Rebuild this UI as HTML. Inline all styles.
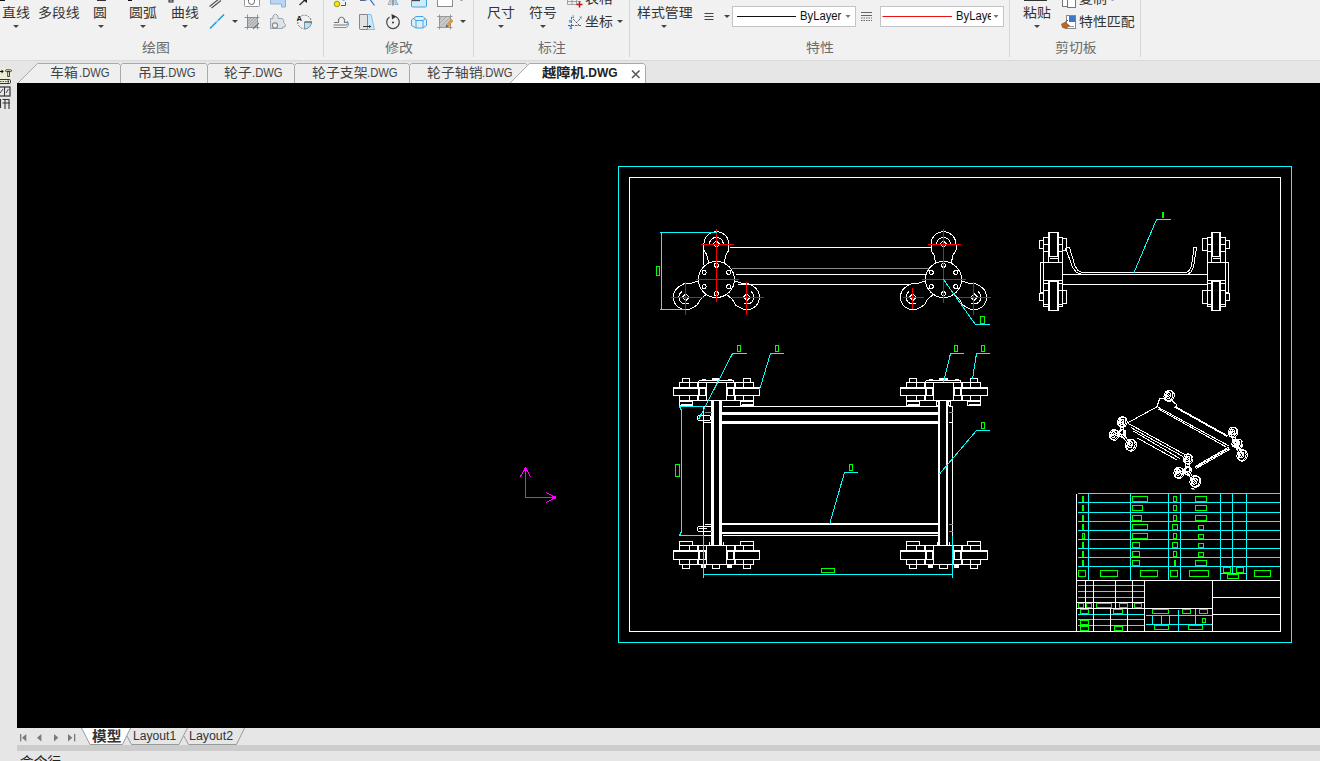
<!DOCTYPE html>
<html lang="zh-CN">
<head>
<meta charset="utf-8">
<title>越障机.DWG</title>
<style>
*{box-sizing:border-box;margin:0;padding:0}
html,body{width:1320px;height:761px;overflow:hidden;background:#e6e6e6}
body{position:relative;font-family:"Liberation Sans","Noto Sans CJK SC",sans-serif;font-size:13px;color:#262626}
#ribbon{position:absolute;left:0;top:0;width:1320px;height:61px;background:#f1f1f1;border-bottom:1px solid #d9d9d9;overflow:hidden}
#ribbon .lbl{position:absolute;transform:scaleX(1.07);transform-origin:0 0;white-space:nowrap;font-size:13px;line-height:16px;color:#333}
#ribbon .ttl{position:absolute;transform:scaleX(1.07);transform-origin:0 0;white-space:nowrap;font-size:13px;line-height:16px;color:#6b6b6b;top:40px}
#ribbon .sep{position:absolute;top:0;width:1px;height:57px;background:#d6d6d6}
#ribbon .dd{position:absolute;width:0;height:0;border-left:3px solid transparent;border-right:3px solid transparent;border-top:3px solid #444}
#ribbon .combo{position:absolute;top:6px;height:21px;background:#fff;border:1px solid #c4c4c4;overflow:hidden}
#ribbon .combo span{position:absolute;top:1px;font-size:12.5px;line-height:17px;color:#111;white-space:nowrap;transform:scaleX(.9);transform-origin:0 0}
#ribbon .combo b{position:absolute;top:0;height:19px;overflow:hidden;font-weight:normal}
#ribbon svg{position:absolute;left:0;top:0}
#tabbar{position:absolute;left:0;top:61px;width:1320px;height:22px;background:#e6e6e6}
#tabbar svg{position:absolute;left:0;top:0}
#tabbar .t{position:absolute;top:4px;font-size:13px;line-height:16px;white-space:nowrap;color:#444}
#tabbar .t.c{transform:scaleX(1.07);transform-origin:0 0}
#tabbar .t.l{font-size:12.5px;transform:scaleX(0.9);transform-origin:0 0}
#tabbar .t.l.act{transform:scaleX(0.96)}
#tabbar .t.act{font-weight:bold;color:#222}
#gutter{position:absolute;left:0;top:83px;width:17px;height:678px;background:#e6e6e6}
#canvas{position:absolute;left:17px;top:83px;width:1303px;height:645px;background:#000;overflow:hidden}
#canvas svg{position:absolute;left:-17px;top:-83px}
#laybar{position:absolute;left:17px;top:728px;width:1303px;height:17px;background:#e6e6e6}
#laybar svg{position:absolute;left:-17px;top:0}
#laybar .t{position:absolute;white-space:nowrap;font-size:13px;line-height:16px;color:#333}
#band{position:absolute;left:17px;top:745px;width:1303px;height:6px;background:#cccccc}
#cmd{position:absolute;left:20px;top:754px;transform:scaleX(1.05);transform-origin:0 0;font-size:13px;line-height:16px;color:#222;white-space:nowrap}
</style>
</head>
<body>
<div id="ribbon">
<span class="lbl" style="left:2px;top:5px">直线</span>
<span class="lbl" style="left:38px;top:5px">多段线</span>
<span class="lbl" style="left:93px;top:5px">圆</span>
<span class="lbl" style="left:129px;top:5px">圆弧</span>
<span class="lbl" style="left:171px;top:5px">曲线</span>
<i class="dd" style="left:13px;top:25px"></i>
<i class="dd" style="left:98px;top:25px"></i>
<i class="dd" style="left:140px;top:25px"></i>
<i class="dd" style="left:182px;top:25px"></i>
<i class="dd" style="left:232px;top:20px"></i>
<span class="ttl" style="left:142px">绘图</span>
<i class="sep" style="left:323px"></i>
<i class="dd" style="left:460px;top:20px"></i>
<span class="ttl" style="left:385px">修改</span>
<i class="sep" style="left:473px"></i>
<span class="lbl" style="left:487px;top:5px">尺寸</span>
<span class="lbl" style="left:529px;top:5px">符号</span>
<i class="dd" style="left:498px;top:25px"></i>
<i class="dd" style="left:540px;top:25px"></i>
<span class="lbl" style="left:585px;top:-9px">表格</span>
<span class="lbl" style="left:585px;top:14px">坐标</span>
<i class="dd" style="left:617px;top:20px"></i>
<span class="ttl" style="left:538px">标注</span>
<i class="sep" style="left:629px"></i>
<span class="lbl" style="left:637px;top:5px">样式管理</span>
<i class="dd" style="left:661px;top:25px"></i>
<i class="dd" style="left:724px;top:15px"></i>
<div class="combo" style="left:732px;width:124px"><span style="left:67px">ByLayer</span></div>
<div class="combo" style="left:880px;width:124px"><b style="left:75px;width:35px"><span style="left:0">ByLayer</span></b></div>
<span class="ttl" style="left:806px">特性</span>
<i class="sep" style="left:1009px"></i>
<span class="lbl" style="left:1023px;top:5px">粘贴</span>
<i class="dd" style="left:1034px;top:25px"></i>
<span class="lbl" style="left:1079px;top:-9px">复制</span>
<span class="lbl" style="left:1079px;top:14px">特性匹配</span>
<span class="ttl" style="left:1055px">剪切板</span>
<i class="sep" style="left:1140px"></i>
<svg width="1320" height="60" viewBox="0 0 1320 60" fill="none">
<!--RICONS-->
<!-- top-left residue -->
<rect x="0" y="0" width="5" height="1" fill="#111"/><rect x="97" y="0" width="9" height="1" fill="#333"/><rect x="128" y="0" width="4" height="1" fill="#111"/><rect x="169" y="0" width="4" height="2" fill="none" stroke="#222"/>
<!-- draw panel small icons -->
<path d="M209.5 6.5 L219 -1 M211.5 8 L221 0.5" stroke="#555" stroke-width="1.2"/>
<path d="M210 28.5 L216.5 22 M218 20.5 L224 14.5" stroke="#1da1e6" stroke-width="1.6"/><rect x="216.6" y="20.6" width="1.2" height="1.2" fill="#1da1e6"/>
<rect x="244.5" y="-3" width="15" height="9.5" rx="1" fill="#fff" stroke="#9a9a9a"/><path d="M248.5 0 V1.5 A3 3 0 0 0 254.5 1.5 V0" stroke="#666"/>
<path d="M270.5 0 V4 H281.5 V7 H285.5 V0" fill="#bcd5f2" stroke="#8fb0da"/>
<path d="M299.5 5 L306 -1" stroke="#333" stroke-width="1.3"/><path d="M303 0 H307 V3 Z" fill="#222"/>
<rect x="247" y="17" width="10" height="10" fill="#c4c7ca"/><path d="M247 19 l2-2 M247 22 l5-5 M247 25 l8-8 M248 27 l9-9 M251 27 l6-6 M254 27 l3-3" stroke="#9a9da1" stroke-width=".8"/><path d="M244.5 17.5 H259.5 M244.5 27.5 H259.5 M247.5 14.5 V29.5 M257.5 14.5 V29.5" stroke="#7d7d7d" stroke-width=".8"/><path d="M253 29 L259 23" stroke="#777" stroke-width="1.1"/>
<path d="M270.5 28.5 V18.5 H273 V16 Q275.5 12.5 278 16 V18.5 H282 Q285 20 283.5 22.5 Q286.5 24 285 27 H282.5 V28.5 Z" fill="#dfe3ea" stroke="#9aa3b0"/><circle cx="275" cy="25.5" r="2.6" fill="#f1f1f1" stroke="#8e8e8e" stroke-width="1.2"/>
<circle cx="304.5" cy="22" r="6.8" stroke="#666" stroke-dasharray="2 1.2" stroke-width=".9"/><path d="M304.5 22 V29 A7 7 0 0 0 311.5 22 Z" fill="#b6e3f8" stroke="#6a7f8c" stroke-width=".8"/><path d="M304.5 22 H311.5" stroke="#555"/><text x="296.5" y="20.5" font-family="Liberation Sans,sans-serif" font-size="7.5" font-weight="bold" fill="#222">A</text>
<!-- modify panel -->
<circle cx="337" cy="4" r="2.8" fill="#f4e800" stroke="#8a8400" stroke-width=".8"/><path d="M341 5.5 H345.5 V2" stroke="#b03030" stroke-width="1"/><path d="M342.5 0 h2" stroke="#2a6fd0"/>
<path d="M360 0 H367 M369 -2 L374.5 5.5" stroke="#2a6fd0" stroke-width="1.2"/><path d="M360 0 H365" stroke="#555" stroke-width="1.6"/>
<path d="M388 4.5 L391 -2 V4.5 Z" fill="#e8e8e8" stroke="#999" stroke-width=".8"/><path d="M398 4.5 L395 -2 V4.5 Z" fill="#bfe0f5" stroke="#6aa9d8" stroke-width=".8"/><path d="M393 -1 V5.5" stroke="#777" stroke-width="1.4"/>
<rect x="411.5" y="-2" width="15" height="9" rx="1" fill="#c9ebfb" stroke="#4aa3e0"/><path d="M412 0.5 H420" stroke="#444" stroke-width="1.3"/>
<rect x="437.500" y="-3" width="15" height="9.500" fill="#fff" stroke="#8a8a8a"/><path d="M437.5 0 v3" stroke="#4aa3e0"/>
<path d="M460.500 0 h2" stroke="#444"/>
<path d="M334 22.500 H338.500 V19.500 Q341.500 14.500 344.500 19.500 V22.500 H347" stroke="#777" stroke-width="1.200"/><path d="M333.500 25 H346.500 Q349.500 23.500 347 21" stroke="#777" stroke-width="1"/><path d="M333.500 27.500 H346 Q350 25.500 347.500 22" stroke="#4aa3e0" stroke-width="1"/>
<path d="M367.500 14.500 H371 L374.500 29.500 H367.500 Z" fill="#c9ebfb" stroke="#6ab4e6" stroke-width=".8"/><path d="M359.500 14.500 H367.500 V29.500 H360.500 Q359.500 29.500 359.500 28.500 Z" fill="#e2e2e2" stroke="#888"/><path d="M363 26.500 H370" stroke="#333"/><path d="M369 25 L371.500 26.500 L369 28 Z" fill="#333"/>
<path d="M396 16.700 A6.300 6.300 0 1 1 389.500 17" stroke="#444" stroke-width="1.200"/><path d="M391.500 14 L396.500 16.500 L392 19.500 Z" fill="#333"/><circle cx="393" cy="22.500" r="1" fill="#333"/>
<path d="M411.500 20 L416 16.500 H423 L426.500 20 V25.500 L423 28 H416 L411.500 25.500 Z" fill="#d9f0fb" stroke="#4a9fe0"/><path d="M416 20.500 H423 V28 M416 20.500 V28 M416 20.500 L413.500 18.500 M423 20.500 L425.500 18.500" stroke="#4a9fe0"/>
<rect x="439" y="16.500" width="11.500" height="11" fill="#c9cccf"/><path d="M439 20 l3.500-3.500 M439 24 l7.500-7.500 M440 27.500 l10.500-10.500 M444 27.500 l6.500-6.500 M448 27.500 l2.500-2.500" stroke="#9b9ea2" stroke-width=".8"/><path d="M437 16.500 H452.500 M437 27.500 H452.500 M439.500 14.500 V29.500 M450.500 14.500 V29.500" stroke="#888" stroke-width=".8"/><path d="M446.500 25 L451.500 19.500 L453 21 L448 26.500 Z" fill="#f0a030" stroke="#b87410" stroke-width=".6"/><path d="M446.500 25 L446 27 L448 26.500 Z" fill="#333"/>
<!-- annotate panel -->
<path d="M567.500 -2 V4.500 H581 M567.500 1.500 H581 M572 -2 V4.500 M576.500 -2 V4.500" stroke="#999" stroke-width=".9"/><path d="M576.500 4.500 H582.500 M579.500 1.500 V7.500" stroke="#c01818" stroke-width="1.500"/>
<path d="M571.500 17 V29 M568 25.500 H582 M573 19 L579 25 M580 19 L576 23" stroke="#555" stroke-width=".9" stroke-dasharray="2.500 1"/><path d="M569 20 l1 1.500 l1 -1.500 M570 21.500 v1.500 M569.500 26.500 h1.500 v2 h-1.500 M572.500 16 h1.500 m-1.500 1.500 h1.500 M580 16.500 l1.500 2 m0 -2 l-1.500 2" stroke="#2a7fd8" stroke-width=".9"/>
<!-- properties panel -->
<path d="M704.500 13.500 H713.500 M704.500 16.500 H713.500 M704.500 19.500 H713.500" stroke="#444" stroke-width="1.200"/>
<path d="M737 16.500 H796" stroke="#111" stroke-width="1.200"/>
<path d="M845.500 15 h5 l-2.500 3 Z" fill="#777"/>
<path d="M861 12.500 H872 M861 15.500 H872" stroke="#666" stroke-width="1.200"/><path d="M861 18 H872 M861 20.500 H872" stroke="#666" stroke-width="1" stroke-dasharray="1.500 1"/>
<path d="M882.500 16.500 H952" stroke="#e81010" stroke-width="1.200"/>
<path d="M993.500 15 h5 l-2.500 3 Z" fill="#777"/>
<!-- clipboard panel -->
<rect x="1024" y="-2" width="23" height="3" fill="#333"/>
<rect x="1062.500" y="-3" width="8" height="9.500" fill="#fff" stroke="#777"/><rect x="1067.500" y="-1" width="8" height="8.500" fill="#fff" stroke="#777"/>
<path d="M1111.500 0 h2" stroke="#555"/>
<rect x="1066.500" y="15.500" width="9" height="13" fill="#fff" stroke="#888"/><rect x="1069" y="16" width="6.500" height="6" fill="#3c78c8"/><path d="M1067 26.500 H1074" stroke="#999"/><path d="M1061.500 24 L1065 22.500 L1069.500 25.500 L1066 28.500 L1062.500 27.500 Z" fill="#b86a22" stroke="#8a4a10" stroke-width=".6"/><path d="M1065 22.500 L1068 20" stroke="#555"/>
<!--/RICONS-->
</svg>

</div>
<div id="tabbar">
<svg width="1320" height="22" viewBox="0 61 1320 22" fill="none">
<path d="M17.5 83.5 L37.5 63.5 H118.5 L120.5 65.5 V83.5 Z" fill="#efefef" stroke="#a9a9a9"/>
<path d="M120.5 83.5 V65.5 L122.5 63.5 H205.5 L207.5 65.5 V83.5 Z" fill="#efefef" stroke="#a9a9a9"/>
<path d="M207.5 83.5 V65.5 L209.5 63.5 H292.5 L294.5 65.5 V83.5 Z" fill="#efefef" stroke="#a9a9a9"/>
<path d="M294.5 83.5 V65.5 L296.5 63.5 H407.5 L409.5 65.5 V83.5 Z" fill="#efefef" stroke="#a9a9a9"/>
<path d="M409.5 83.5 V65.5 L411.5 63.5 H525.5 L527.5 65.5 V83.5 Z" fill="#efefef" stroke="#a9a9a9"/>
<path d="M509.5 83.5 L529.5 63.5 H643.5 L645.5 65.5 V83.5 Z" fill="#ffffff" stroke="#a9a9a9"/>
<path d="M632 70.5 L639.5 78 M639.5 70.5 L632 78" stroke="#555" stroke-width="1.5"/>
</svg>
<span class="t c" style="left:50px">车箱</span><span class="t l" style="left:79px">.DWG</span>
<span class="t c" style="left:138px">吊耳</span><span class="t l" style="left:165px">.DWG</span>
<span class="t c" style="left:224px">轮子</span><span class="t l" style="left:252px">.DWG</span>
<span class="t c" style="left:312px">轮子支架</span><span class="t l" style="left:367px">.DWG</span>
<span class="t c" style="left:427px">轮子轴销</span><span class="t l" style="left:482px">.DWG</span>
<span class="t c act" style="left:542px;transform:scaleX(1.1)">越障机</span><span class="t l act" style="left:585px">.DWG</span>
</div>
<div id="gutter"></div>
<svg id="gicons" width="17" height="60" viewBox="0 60 17 60" style="position:absolute;left:0;top:60px">
<!--GICONS-->
<rect x="0" y="68" width="12" height="16" fill="#ececd8"/>
<path d="M0 71.500 H2" stroke="#111" stroke-width="1.200"/><path d="M1.500 69.500 L3.800 71.500 L1.500 73.500 Z" fill="#111"/>
<rect x="5.500" y="69.800" width="6" height="1.800" rx=".9" stroke="#333" fill="none" stroke-width=".9"/><rect x="7.700" y="71.500" width="1.800" height="5" stroke="#333" fill="none" stroke-width=".9"/>
<rect x="-2" y="79.500" width="12.500" height="4" rx="1.200" stroke="#333" fill="none" stroke-width="1"/><path d="M0 81.500 H7" stroke="#555" stroke-width="1" stroke-dasharray="1.500 1"/><rect x="7.500" y="80.500" width="1.500" height="2" fill="#333"/>
<rect x="-2" y="87" width="12" height="9" stroke="#333" fill="none" stroke-width="1.2"/><path d="M4.500 87 V96" stroke="#333"/><path d="M0 93 L3 89 M6 93 L8.500 89" stroke="#333" stroke-width=".9"/>
<path d="M0.500 99 V108 M5 99 V109 M9 99 V109 M2.500 99.500 H9.500 M2.500 103 H10" stroke="#333" stroke-width="1.100"/>
<!--/GICONS-->
</svg>
<div id="canvas">
<svg width="1320" height="761" viewBox="0 0 1320 761" shape-rendering="crispEdges" fill="none" stroke-width="1">
<!--CAD-->
<rect x="618.5" y="166.5" width="673" height="476" stroke="#00ffff"/>
<rect x="629.5" y="177.5" width="651" height="454" stroke="#ffffff"/>
<path d="M525.5 468.5L525.5 497.5" stroke="#ff00ff"/>
<path d="M525.5 497.5L555.5 497.5" stroke="#ff00ff"/>
<path d="M520.2 477L525.5 468L530.8 477" stroke="#ff00ff"/>
<path d="M546 492.2L555 497.5L546 502.8" stroke="#ff00ff"/>
<rect x="524" y="468" width="3" height="2" fill="#ff00ff"/>
<rect x="553" y="496" width="3" height="3" fill="#ff00ff"/>
<circle cx="716.4" cy="279.5" r="18" stroke="#ffffff"/>
<path d="M703.9 244.2L704.09 242.03L704.65 239.92L705.57 237.95L706.82 236.17L708.37 234.62L710.15 233.37L712.12 232.45L714.23 231.89L716.4 231.7L718.57 231.89L720.68 232.45L722.65 233.37L724.43 234.62L725.98 236.17L727.23 237.95L728.15 239.92L728.71 242.03L728.9 244.2" stroke="#ffffff"/>
<path d="M709.53 243.6L710 241.62L711.04 239.86L712.54 238.48L714.38 237.6L716.4 237.3L718.42 237.6L720.26 238.48L721.76 239.86L722.8 241.62L723.27 243.6" stroke="#ffffff"/>
<path d="M713 244.2L716.4 240.8L719.8 244.2L716.4 247.6Z" stroke="#ffffff"/>
<path d="M728.9 244.2L728.9 250L726 255L725.1 258.5L724.2 263.2" stroke="#ffffff"/>
<path d="M703.9 244.2L703.9 250L706.8 255L707.7 258.5L708.6 263.2" stroke="#ffffff"/>
<path d="M753.22 286.32L755.01 287.57L756.55 289.12L757.8 290.9L758.72 292.87L759.28 294.98L759.47 297.15L759.28 299.32L758.72 301.43L757.8 303.4L756.55 305.18L755.01 306.73L753.22 307.98L751.25 308.9L749.14 309.46L746.97 309.65L744.8 309.46L742.7 308.9L740.72 307.98" stroke="#ffffff"/>
<path d="M750.93 291.5L752.41 292.9L753.41 294.68L753.85 296.67L753.69 298.7L752.95 300.6L751.68 302.2L750 303.35L748.05 303.97L746.01 303.98L744.05 303.4" stroke="#ffffff"/>
<path d="M743.57 297.15L746.97 293.75L750.37 297.15L746.97 300.55Z" stroke="#ffffff"/>
<path d="M740.72 307.98L735.7 305.08L732.82 300.06L730.24 297.53L726.62 294.4" stroke="#ffffff"/>
<path d="M753.22 286.32L748.2 283.42L742.42 283.44L738.94 282.47L734.42 280.9" stroke="#ffffff"/>
<path d="M692.08 307.98L690.1 308.9L688 309.46L685.83 309.65L683.66 309.46L681.55 308.9L679.58 307.98L677.79 306.73L676.25 305.18L675 303.4L674.08 301.43L673.52 299.32L673.33 297.15L673.52 294.98L674.08 292.87L675 290.9L676.25 289.12L677.79 287.57L679.58 286.32" stroke="#ffffff"/>
<path d="M688.75 303.4L686.79 303.98L684.75 303.97L682.8 303.35L681.12 302.2L679.85 300.6L679.11 298.7L678.95 296.67L679.39 294.68L680.39 292.9L681.87 291.5" stroke="#ffffff"/>
<path d="M682.43 297.15L685.83 293.75L689.23 297.15L685.83 300.55Z" stroke="#ffffff"/>
<path d="M679.58 286.32L684.6 283.42L690.38 283.44L693.86 282.47L698.38 280.9" stroke="#ffffff"/>
<path d="M692.08 307.98L697.1 305.08L699.98 300.06L702.56 297.53L706.18 294.4" stroke="#ffffff"/>
<circle cx="716.4" cy="265.3" r="2" stroke="#ffffff"/>
<circle cx="728.7" cy="272.4" r="2" stroke="#ffffff"/>
<circle cx="728.7" cy="286.6" r="2" stroke="#ffffff"/>
<circle cx="716.4" cy="293.7" r="2" stroke="#ffffff"/>
<circle cx="704.1" cy="286.6" r="2" stroke="#ffffff"/>
<circle cx="704.1" cy="272.4" r="2" stroke="#ffffff"/>
<circle cx="943.5" cy="279.5" r="18" stroke="#ffffff"/>
<path d="M931 244.2L931.19 242.03L931.75 239.92L932.67 237.95L933.92 236.17L935.47 234.62L937.25 233.37L939.22 232.45L941.33 231.89L943.5 231.7L945.67 231.89L947.78 232.45L949.75 233.37L951.53 234.62L953.08 236.17L954.33 237.95L955.25 239.92L955.81 242.03L956 244.2" stroke="#ffffff"/>
<path d="M936.63 243.6L937.1 241.62L938.14 239.86L939.64 238.48L941.48 237.6L943.5 237.3L945.52 237.6L947.36 238.48L948.86 239.86L949.9 241.62L950.37 243.6" stroke="#ffffff"/>
<path d="M940.1 244.2L943.5 240.8L946.9 244.2L943.5 247.6Z" stroke="#ffffff"/>
<path d="M956 244.2L956 250L953.1 255L952.2 258.5L951.3 263.2" stroke="#ffffff"/>
<path d="M931 244.2L931 250L933.9 255L934.8 258.5L935.7 263.2" stroke="#ffffff"/>
<path d="M980.32 286.32L982.11 287.57L983.65 289.12L984.9 290.9L985.82 292.87L986.38 294.98L986.57 297.15L986.38 299.32L985.82 301.43L984.9 303.4L983.65 305.18L982.11 306.73L980.32 307.98L978.35 308.9L976.24 309.46L974.07 309.65L971.9 309.46L969.8 308.9L967.82 307.98" stroke="#ffffff"/>
<path d="M978.03 291.5L979.51 292.9L980.51 294.68L980.95 296.67L980.79 298.7L980.05 300.6L978.78 302.2L977.1 303.35L975.15 303.97L973.11 303.98L971.15 303.4" stroke="#ffffff"/>
<path d="M970.67 297.15L974.07 293.75L977.47 297.15L974.07 300.55Z" stroke="#ffffff"/>
<path d="M967.82 307.98L962.8 305.08L959.92 300.06L957.34 297.53L953.72 294.4" stroke="#ffffff"/>
<path d="M980.32 286.32L975.3 283.42L969.52 283.44L966.04 282.47L961.52 280.9" stroke="#ffffff"/>
<path d="M919.18 307.98L917.2 308.9L915.1 309.46L912.93 309.65L910.76 309.46L908.65 308.9L906.68 307.98L904.89 306.73L903.35 305.18L902.1 303.4L901.18 301.43L900.62 299.32L900.43 297.15L900.62 294.98L901.18 292.87L902.1 290.9L903.35 289.12L904.89 287.57L906.68 286.32" stroke="#ffffff"/>
<path d="M915.85 303.4L913.89 303.98L911.85 303.97L909.9 303.35L908.22 302.2L906.95 300.6L906.21 298.7L906.05 296.67L906.49 294.68L907.49 292.9L908.97 291.5" stroke="#ffffff"/>
<path d="M909.53 297.15L912.93 293.75L916.33 297.15L912.93 300.55Z" stroke="#ffffff"/>
<path d="M906.68 286.32L911.7 283.42L917.48 283.44L920.96 282.47L925.48 280.9" stroke="#ffffff"/>
<path d="M919.18 307.98L924.2 305.08L927.08 300.06L929.66 297.53L933.28 294.4" stroke="#ffffff"/>
<circle cx="943.5" cy="265.3" r="2" stroke="#ffffff"/>
<circle cx="955.8" cy="272.4" r="2" stroke="#ffffff"/>
<circle cx="955.8" cy="286.6" r="2" stroke="#ffffff"/>
<circle cx="943.5" cy="293.7" r="2" stroke="#ffffff"/>
<circle cx="931.2" cy="286.6" r="2" stroke="#ffffff"/>
<circle cx="931.2" cy="272.4" r="2" stroke="#ffffff"/>
<path d="M703.5 248.5L703.5 264.5" stroke="#ffffff"/>
<path d="M729.5 247.5L931.5 247.5" stroke="#ffffff"/>
<path d="M731.5 268.5L928.5 268.5" stroke="#8c8c8c"/>
<path d="M735.5 274.5L926.5 274.5" stroke="#ffffff"/>
<path d="M737.5 284.5L909.5 284.5" stroke="#ffffff"/>
<path d="M716.5 228.5L716.5 301.5" stroke="#ff0000"/>
<path d="M695.5 279.5L738.5 279.5" stroke="#ff0000"/>
<path d="M700.5 244.5L733.5 244.5" stroke="#ff0000"/>
<path d="M670.5 297.5L703.5 297.5" stroke="#ff0000"/>
<path d="M685.5 281.5L685.5 314.5" stroke="#ff0000"/>
<path d="M731.5 297.5L763.5 297.5" stroke="#ff0000"/>
<path d="M746.5 281.5L746.5 314.5" stroke="#ff0000"/>
<path d="M943.5 228.5L943.5 302.5" stroke="#ff0000"/>
<path d="M921.5 279.5L965.5 279.5" stroke="#ff0000"/>
<path d="M927.5 244.5L960.5 244.5" stroke="#ff0000"/>
<path d="M902.5 297.5L923.5 297.5" stroke="#ff0000"/>
<path d="M912.5 287.5L912.5 308.5" stroke="#ff0000"/>
<path d="M957.5 297.5L990.5 297.5" stroke="#ff0000"/>
<path d="M973.5 281.5L973.5 314.5" stroke="#ff0000"/>
<path d="M661.5 232.5L661.5 309.5" stroke="#00ffff"/>
<path d="M659.5 232.5L716.5 232.5" stroke="#00ffff"/>
<path d="M659.5 309.5L685.5 309.5" stroke="#00ffff"/>
<rect x="656.5" y="266.5" width="3" height="9" stroke="#00ff00"/>
<path d="M943.5 279.5L975 324L990 324" stroke="#00ffff"/>
<rect x="980.5" y="316.5" width="4" height="7" stroke="#00ff00"/>
<rect x="1048.5" y="232.5" width="10" height="30" stroke="#ffffff"/>
<rect x="1049.5" y="232.5" width="8" height="24" stroke="#ffffff"/>
<path d="M1049.5 258.5L1057.5 258.5" stroke="#ffffff"/>
<rect x="1048.5" y="280.5" width="10" height="30" stroke="#ffffff"/>
<rect x="1049.5" y="281.5" width="8" height="29" stroke="#ffffff"/>
<rect x="1043.5" y="262.5" width="19" height="18" stroke="#ffffff"/>
<rect x="1040.5" y="262.5" width="3" height="30" stroke="#ffffff"/>
<rect x="1043.5" y="237.5" width="5" height="25" stroke="#ffffff"/>
<path d="M1043.5 244.5L1048.5 244.5" stroke="#ffffff"/>
<path d="M1043.5 251.5L1048.5 251.5" stroke="#ffffff"/>
<rect x="1039.5" y="240.5" width="4" height="8" stroke="#ffffff"/>
<rect x="1058.5" y="237.5" width="4" height="25" stroke="#ffffff"/>
<path d="M1058.5 244.5L1062.5 244.5" stroke="#ffffff"/>
<path d="M1058.5 251.5L1062.5 251.5" stroke="#ffffff"/>
<rect x="1062.5" y="238.5" width="4" height="12" stroke="#ffffff"/>
<rect x="1043.5" y="280.5" width="5" height="26" stroke="#ffffff"/>
<path d="M1043.5 283.5L1048.5 283.5" stroke="#ffffff"/>
<path d="M1043.5 290.5L1048.5 290.5" stroke="#ffffff"/>
<path d="M1043.5 304.5L1048.5 304.5" stroke="#ffffff"/>
<rect x="1039.5" y="293.5" width="4" height="7" stroke="#ffffff"/>
<rect x="1058.5" y="280.5" width="4" height="26" stroke="#ffffff"/>
<path d="M1058.5 283.5L1062.5 283.5" stroke="#ffffff"/>
<path d="M1058.5 290.5L1062.5 290.5" stroke="#ffffff"/>
<path d="M1058.5 304.5L1062.5 304.5" stroke="#ffffff"/>
<rect x="1062.5" y="290.5" width="4" height="13" stroke="#ffffff"/>
<rect x="1211.5" y="232.5" width="9" height="30" stroke="#ffffff"/>
<rect x="1212.5" y="232.5" width="7" height="24" stroke="#ffffff"/>
<path d="M1219.5 258.5L1212.5 258.5" stroke="#ffffff"/>
<rect x="1211.5" y="280.5" width="9" height="30" stroke="#ffffff"/>
<rect x="1212.5" y="281.5" width="7" height="29" stroke="#ffffff"/>
<rect x="1207.5" y="262.5" width="18" height="18" stroke="#ffffff"/>
<rect x="1225.5" y="262.5" width="3" height="30" stroke="#ffffff"/>
<rect x="1220.5" y="237.5" width="5" height="25" stroke="#ffffff"/>
<path d="M1225.5 244.5L1220.5 244.5" stroke="#ffffff"/>
<path d="M1225.5 251.5L1220.5 251.5" stroke="#ffffff"/>
<rect x="1225.5" y="240.5" width="4" height="8" stroke="#ffffff"/>
<rect x="1207.5" y="237.5" width="4" height="25" stroke="#ffffff"/>
<path d="M1211.5 244.5L1207.5 244.5" stroke="#ffffff"/>
<path d="M1211.5 251.5L1207.5 251.5" stroke="#ffffff"/>
<rect x="1202.5" y="238.5" width="5" height="12" stroke="#ffffff"/>
<rect x="1220.5" y="280.5" width="5" height="26" stroke="#ffffff"/>
<path d="M1225.5 283.5L1220.5 283.5" stroke="#ffffff"/>
<path d="M1225.5 290.5L1220.5 290.5" stroke="#ffffff"/>
<path d="M1225.5 304.5L1220.5 304.5" stroke="#ffffff"/>
<rect x="1225.5" y="293.5" width="4" height="7" stroke="#ffffff"/>
<rect x="1207.5" y="280.5" width="4" height="26" stroke="#ffffff"/>
<path d="M1211.5 283.5L1207.5 283.5" stroke="#ffffff"/>
<path d="M1211.5 290.5L1207.5 290.5" stroke="#ffffff"/>
<path d="M1211.5 304.5L1207.5 304.5" stroke="#ffffff"/>
<rect x="1202.5" y="290.5" width="5" height="13" stroke="#ffffff"/>
<path d="M1062.5 274.5L1207.5 274.5" stroke="#ffffff"/>
<path d="M1062.5 284.5L1207.5 284.5" stroke="#ffffff"/>
<path d="M1067 247.5L1069.5 247.5L1075 266L1078 270.5L1082 272.5L1186 272.5L1189.5 270.5L1191.5 266L1194 247.5L1196.5 247.5" stroke="#ffffff"/>
<path d="M1065.5 248L1072.5 267L1076 272L1080.5 274" stroke="#ffffff"/>
<path d="M1196.5 247.5L1193.5 267L1191 272L1188 274" stroke="#ffffff"/>
<path d="M1134 272.5L1156.5 219.5L1171 219.5" stroke="#00ffff"/>
<rect x="1162" y="212" width="2" height="6" fill="#00ff00"/>
<rect x="706.5" y="382.5" width="20" height="18" stroke="#ffffff"/>
<path d="M726.5 387.5L759.5 387.5L759.5 395.5L726.5 395.5" stroke="#ffffff"/>
<path d="M726.5 388.5L759.5 388.5" stroke="#ffffff"/>
<rect x="726.5" y="382.5" width="8" height="18" stroke="#ffffff"/>
<path d="M727.5 388.5L727.5 395.5" stroke="#ffffff"/>
<path d="M733.5 388.5L733.5 395.5" stroke="#ffffff"/>
<rect x="735.5" y="382.5" width="18" height="5" stroke="#ffffff"/>
<path d="M743.5 382.5L743.5 387.5" stroke="#ffffff"/>
<rect x="735.5" y="395.5" width="18" height="5" stroke="#ffffff"/>
<path d="M743.5 395.5L743.5 400.5" stroke="#ffffff"/>
<path d="M734.5 400.5L735.5 400.5" stroke="#ffffff"/>
<rect x="743.5" y="378.5" width="7" height="4" stroke="#ffffff"/>
<rect x="740.5" y="401.5" width="13" height="4" stroke="#ffffff" rx="1"/>
<path d="M741.5 404.5L752.5 404.5" stroke="#ffffff"/>
<path d="M706.5 387.5L673.5 387.5L673.5 395.5L706.5 395.5" stroke="#ffffff"/>
<path d="M706.5 388.5L673.5 388.5" stroke="#ffffff"/>
<rect x="698.5" y="382.5" width="8" height="18" stroke="#ffffff"/>
<path d="M705.5 388.5L705.5 395.5" stroke="#ffffff"/>
<path d="M699.5 388.5L699.5 395.5" stroke="#ffffff"/>
<rect x="679.5" y="382.5" width="18" height="5" stroke="#ffffff"/>
<path d="M689.5 382.5L689.5 387.5" stroke="#ffffff"/>
<rect x="679.5" y="395.5" width="18" height="5" stroke="#ffffff"/>
<path d="M689.5 395.5L689.5 400.5" stroke="#ffffff"/>
<path d="M698.5 400.5L697.5 400.5" stroke="#ffffff"/>
<rect x="682.5" y="378.5" width="7" height="4" stroke="#ffffff"/>
<rect x="679.5" y="401.5" width="13" height="4" stroke="#ffffff" rx="1"/>
<path d="M691.5 404.5L680.5 404.5" stroke="#ffffff"/>
<path d="M698.5 380.5L733.5 380.5" stroke="#ffffff"/>
<path d="M698.5 380.5L698.5 382.5" stroke="#ffffff"/>
<path d="M733.5 380.5L733.5 382.5" stroke="#ffffff"/>
<path d="M701.5 379.5L705.5 379.5" stroke="#ffffff"/>
<path d="M727.5 379.5L731.5 379.5" stroke="#ffffff"/>
<rect x="712" y="378" width="8.4" height="2" fill="#ffffff"/>
<rect x="933.5" y="382.5" width="20" height="18" stroke="#ffffff"/>
<path d="M953.5 387.5L987.5 387.5L987.5 395.5L953.5 395.5" stroke="#ffffff"/>
<path d="M953.5 388.5L987.5 388.5" stroke="#ffffff"/>
<rect x="953.5" y="382.5" width="8" height="18" stroke="#ffffff"/>
<path d="M954.5 388.5L954.5 395.5" stroke="#ffffff"/>
<path d="M960.5 388.5L960.5 395.5" stroke="#ffffff"/>
<rect x="962.5" y="382.5" width="18" height="5" stroke="#ffffff"/>
<path d="M970.5 382.5L970.5 387.5" stroke="#ffffff"/>
<rect x="962.5" y="395.5" width="18" height="5" stroke="#ffffff"/>
<path d="M970.5 395.5L970.5 400.5" stroke="#ffffff"/>
<path d="M961.5 400.5L962.5 400.5" stroke="#ffffff"/>
<rect x="970.5" y="378.5" width="7" height="4" stroke="#ffffff"/>
<rect x="967.5" y="401.5" width="13" height="4" stroke="#ffffff" rx="1"/>
<path d="M968.5 404.5L979.5 404.5" stroke="#ffffff"/>
<path d="M933.5 387.5L900.5 387.5L900.5 395.5L933.5 395.5" stroke="#ffffff"/>
<path d="M933.5 388.5L900.5 388.5" stroke="#ffffff"/>
<rect x="925.5" y="382.5" width="8" height="18" stroke="#ffffff"/>
<path d="M932.5 388.5L932.5 395.5" stroke="#ffffff"/>
<path d="M926.5 388.5L926.5 395.5" stroke="#ffffff"/>
<rect x="906.5" y="382.5" width="18" height="5" stroke="#ffffff"/>
<path d="M916.5 382.5L916.5 387.5" stroke="#ffffff"/>
<rect x="906.5" y="395.5" width="18" height="5" stroke="#ffffff"/>
<path d="M916.5 395.5L916.5 400.5" stroke="#ffffff"/>
<path d="M925.5 400.5L924.5 400.5" stroke="#ffffff"/>
<rect x="909.5" y="378.5" width="7" height="4" stroke="#ffffff"/>
<rect x="906.5" y="401.5" width="13" height="4" stroke="#ffffff" rx="1"/>
<path d="M918.5 404.5L907.5 404.5" stroke="#ffffff"/>
<path d="M925.5 380.5L960.5 380.5" stroke="#ffffff"/>
<path d="M925.5 380.5L925.5 382.5" stroke="#ffffff"/>
<path d="M960.5 380.5L960.5 382.5" stroke="#ffffff"/>
<path d="M928.5 379.5L932.5 379.5" stroke="#ffffff"/>
<path d="M954.5 379.5L958.5 379.5" stroke="#ffffff"/>
<rect x="939.1" y="378" width="8.4" height="2" fill="#ffffff"/>
<rect x="706.5" y="545.5" width="20" height="19" stroke="#ffffff"/>
<path d="M726.5 550.5L759.5 550.5L759.5 559.5L726.5 559.5" stroke="#ffffff"/>
<path d="M726.5 551.5L759.5 551.5" stroke="#ffffff"/>
<rect x="726.5" y="545.5" width="8" height="19" stroke="#ffffff"/>
<path d="M727.5 551.5L727.5 559.5" stroke="#ffffff"/>
<path d="M733.5 551.5L733.5 559.5" stroke="#ffffff"/>
<rect x="735.5" y="545.5" width="18" height="5" stroke="#ffffff"/>
<path d="M743.5 545.5L743.5 550.5" stroke="#ffffff"/>
<rect x="735.5" y="559.5" width="18" height="5" stroke="#ffffff"/>
<path d="M743.5 559.5L743.5 564.5" stroke="#ffffff"/>
<path d="M734.5 564.5L735.5 564.5" stroke="#ffffff"/>
<rect x="743.5" y="564.5" width="7" height="4" stroke="#ffffff"/>
<rect x="740.5" y="541.5" width="13" height="4" stroke="#ffffff"/>
<path d="M706.5 550.5L673.5 550.5L673.5 559.5L706.5 559.5" stroke="#ffffff"/>
<path d="M706.5 551.5L673.5 551.5" stroke="#ffffff"/>
<rect x="698.5" y="545.5" width="8" height="19" stroke="#ffffff"/>
<path d="M705.5 551.5L705.5 559.5" stroke="#ffffff"/>
<path d="M699.5 551.5L699.5 559.5" stroke="#ffffff"/>
<rect x="679.5" y="545.5" width="18" height="5" stroke="#ffffff"/>
<path d="M689.5 545.5L689.5 550.5" stroke="#ffffff"/>
<rect x="679.5" y="559.5" width="18" height="5" stroke="#ffffff"/>
<path d="M689.5 559.5L689.5 564.5" stroke="#ffffff"/>
<path d="M698.5 564.5L697.5 564.5" stroke="#ffffff"/>
<rect x="682.5" y="564.5" width="7" height="4" stroke="#ffffff"/>
<rect x="679.5" y="541.5" width="13" height="4" stroke="#ffffff"/>
<rect x="701" y="565" width="5" height="3" fill="#ffffff"/>
<rect x="727" y="565" width="5" height="3" fill="#ffffff"/>
<rect x="712.5" y="564.5" width="7" height="4" stroke="#ffffff"/>
<rect x="933.5" y="545.5" width="20" height="19" stroke="#ffffff"/>
<path d="M953.5 550.5L987.5 550.5L987.5 559.5L953.5 559.5" stroke="#ffffff"/>
<path d="M953.5 551.5L987.5 551.5" stroke="#ffffff"/>
<rect x="953.5" y="545.5" width="8" height="19" stroke="#ffffff"/>
<path d="M954.5 551.5L954.5 559.5" stroke="#ffffff"/>
<path d="M960.5 551.5L960.5 559.5" stroke="#ffffff"/>
<rect x="962.5" y="545.5" width="18" height="5" stroke="#ffffff"/>
<path d="M970.5 545.5L970.5 550.5" stroke="#ffffff"/>
<rect x="962.5" y="559.5" width="18" height="5" stroke="#ffffff"/>
<path d="M970.5 559.5L970.5 564.5" stroke="#ffffff"/>
<path d="M961.5 564.5L962.5 564.5" stroke="#ffffff"/>
<rect x="970.5" y="564.5" width="7" height="4" stroke="#ffffff"/>
<rect x="967.5" y="541.5" width="13" height="4" stroke="#ffffff"/>
<path d="M933.5 550.5L900.5 550.5L900.5 559.5L933.5 559.5" stroke="#ffffff"/>
<path d="M933.5 551.5L900.5 551.5" stroke="#ffffff"/>
<rect x="925.5" y="545.5" width="8" height="19" stroke="#ffffff"/>
<path d="M932.5 551.5L932.5 559.5" stroke="#ffffff"/>
<path d="M926.5 551.5L926.5 559.5" stroke="#ffffff"/>
<rect x="906.5" y="545.5" width="18" height="5" stroke="#ffffff"/>
<path d="M916.5 545.5L916.5 550.5" stroke="#ffffff"/>
<rect x="906.5" y="559.5" width="18" height="5" stroke="#ffffff"/>
<path d="M916.5 559.5L916.5 564.5" stroke="#ffffff"/>
<path d="M925.5 564.5L924.5 564.5" stroke="#ffffff"/>
<rect x="909.5" y="564.5" width="7" height="4" stroke="#ffffff"/>
<rect x="906.5" y="541.5" width="13" height="4" stroke="#ffffff"/>
<rect x="928.1" y="565" width="5" height="3" fill="#ffffff"/>
<rect x="954.1" y="565" width="5" height="3" fill="#ffffff"/>
<rect x="939.5" y="564.5" width="8" height="4" stroke="#ffffff"/>
<rect x="711" y="401" width="3" height="145" fill="#ffffff"/>
<rect x="719" y="401" width="3" height="145" fill="#ffffff"/>
<rect x="938" y="401" width="2" height="145" fill="#ffffff"/>
<rect x="946" y="401" width="2" height="145" fill="#ffffff"/>
<rect x="936.5" y="401.5" width="2" height="4" stroke="#ffffff"/>
<rect x="948.5" y="401.5" width="2" height="4" stroke="#ffffff"/>
<rect x="709" y="542" width="1" height="4" fill="#ffffff"/>
<rect x="723" y="542" width="1" height="4" fill="#ffffff"/>
<rect x="937" y="542" width="1" height="4" fill="#ffffff"/>
<rect x="949" y="542" width="1" height="4" fill="#ffffff"/>
<path d="M703.5 406.5L703.5 535.5" stroke="#ffffff"/>
<path d="M952.5 406.5L952.5 535.5" stroke="#ffffff"/>
<path d="M722.5 406.5L938.5 406.5" stroke="#ffffff"/>
<rect x="722" y="412" width="216" height="3" fill="#ffffff"/>
<rect x="722" y="421" width="216" height="3" fill="#ffffff"/>
<rect x="722" y="523" width="216" height="2" fill="#ffffff"/>
<rect x="722" y="532" width="216" height="2" fill="#ffffff"/>
<path d="M722.5 535.5L938.5 535.5" stroke="#ffffff"/>
<path d="M703.5 406.5L710.5 406.5" stroke="#ffffff"/>
<path d="M704.5 412.5L711.5 412.5" stroke="#8c8c8c"/>
<path d="M703.5 422.5L710.5 422.5" stroke="#ffffff"/>
<rect x="697.5" y="415.5" width="13" height="5" stroke="#ffffff" rx="2"/>
<path d="M704.5 524.5L711.5 524.5" stroke="#ffffff"/>
<path d="M704.5 531.5L711.5 531.5" stroke="#8c8c8c"/>
<path d="M703.5 535.5L710.5 535.5" stroke="#ffffff"/>
<rect x="697.5" y="526.5" width="14" height="5" stroke="#ffffff" rx="2"/>
<path d="M698.5 528.5L706.5 528.5" stroke="#ffffff"/>
<path d="M948.5 406.5L952.5 406.5" stroke="#ffffff"/>
<path d="M948.5 412.5L952.5 412.5" stroke="#8c8c8c"/>
<path d="M948.5 422.5L952.5 422.5" stroke="#ffffff"/>
<path d="M948.5 524.5L952.5 524.5" stroke="#8c8c8c"/>
<path d="M948.5 531.5L952.5 531.5" stroke="#8c8c8c"/>
<path d="M678.5 406.5L703.5 406.5" stroke="#00ffff"/>
<path d="M679.5 406.5L681.5 410.5L681.5 531.5L679.5 535.5" stroke="#00ffff"/>
<path d="M678.5 535.5L703.5 535.5" stroke="#00ffff"/>
<rect x="675.5" y="464.5" width="4" height="12" stroke="#00ff00"/>
<path d="M703.5 535.5L703.5 577.5" stroke="#00ffff"/>
<path d="M952.5 535.5L952.5 577.5" stroke="#00ffff"/>
<path d="M703.5 574.5L952.5 574.5" stroke="#00ffff"/>
<rect x="821.5" y="568.5" width="13" height="4" stroke="#00ff00"/>
<path d="M698.5 419.5L732.5 353.5L747 353.5" stroke="#00ffff"/>
<rect x="737.5" y="345.5" width="3" height="6" stroke="#00ff00"/>
<path d="M759.5 390L770.5 353.5L784 353.5" stroke="#00ffff"/>
<rect x="775.5" y="345.5" width="3" height="6" stroke="#00ff00"/>
<path d="M943.5 382.5L950.5 353.5L964 353.5" stroke="#00ffff"/>
<rect x="954.5" y="345.5" width="3" height="6" stroke="#00ff00"/>
<path d="M972.5 379L976.5 353.5L990 353.5" stroke="#00ffff"/>
<rect x="981.5" y="345.5" width="3" height="6" stroke="#00ff00"/>
<path d="M939.5 474L976.5 430.5L990 430.5" stroke="#00ffff"/>
<rect x="981.5" y="422.5" width="3" height="6" stroke="#00ff00"/>
<path d="M829.5 524.5L844.5 472.5L858 472.5" stroke="#00ffff"/>
<rect x="849.5" y="464.5" width="3" height="6" stroke="#00ff00"/>
<ellipse cx="1168.5" cy="395.6" rx="4.4" ry="5.5" stroke="#ffffff" transform="rotate(20 1168.5 395.6)"/>
<ellipse cx="1169.8" cy="396.2" rx="4.4" ry="5.5" stroke="#ffffff" transform="rotate(20 1169.8 396.2)"/>
<ellipse cx="1168.5" cy="395.6" rx="2.2" ry="3.03" stroke="#ffffff" transform="rotate(20 1168.5 395.6)"/>
<ellipse cx="1168.5" cy="395.6" rx="0.82" ry="1.1" stroke="#ffffff" transform="rotate(20 1168.5 395.6)"/>
<path d="M1157 406.5L1159.5 399L1164 398" stroke="#ffffff"/>
<path d="M1172 401L1176 404L1177.5 408" stroke="#ffffff"/>
<ellipse cx="1121.6" cy="421.8" rx="4.16" ry="5.2" stroke="#ffffff" transform="rotate(20 1121.6 421.8)"/>
<ellipse cx="1122.9" cy="422.4" rx="4.16" ry="5.2" stroke="#ffffff" transform="rotate(20 1122.9 422.4)"/>
<ellipse cx="1121.6" cy="421.8" rx="2.08" ry="2.86" stroke="#ffffff" transform="rotate(20 1121.6 421.8)"/>
<ellipse cx="1121.6" cy="421.8" rx="0.78" ry="1.04" stroke="#ffffff" transform="rotate(20 1121.6 421.8)"/>
<ellipse cx="1113.5" cy="434.7" rx="4.16" ry="5.2" stroke="#ffffff" transform="rotate(20 1113.5 434.7)"/>
<ellipse cx="1114.8" cy="435.3" rx="4.16" ry="5.2" stroke="#ffffff" transform="rotate(20 1114.8 435.3)"/>
<ellipse cx="1113.5" cy="434.7" rx="2.08" ry="2.86" stroke="#ffffff" transform="rotate(20 1113.5 434.7)"/>
<ellipse cx="1113.5" cy="434.7" rx="0.78" ry="1.04" stroke="#ffffff" transform="rotate(20 1113.5 434.7)"/>
<ellipse cx="1130.3" cy="444.8" rx="4.64" ry="5.8" stroke="#ffffff" transform="rotate(20 1130.3 444.8)"/>
<ellipse cx="1131.6" cy="445.4" rx="4.64" ry="5.8" stroke="#ffffff" transform="rotate(20 1131.6 445.4)"/>
<ellipse cx="1130.3" cy="444.8" rx="2.32" ry="3.19" stroke="#ffffff" transform="rotate(20 1130.3 444.8)"/>
<ellipse cx="1130.3" cy="444.8" rx="0.87" ry="1.16" stroke="#ffffff" transform="rotate(20 1130.3 444.8)"/>
<ellipse cx="1121.5" cy="433" rx="3" ry="4" stroke="#ffffff" transform="rotate(20 1121.5 433)"/>
<ellipse cx="1122.7" cy="433.6" rx="3" ry="4" stroke="#ffffff" transform="rotate(20 1122.7 433.6)"/>
<path d="M1120 433L1120.1 421.8" stroke="#ffffff"/>
<path d="M1123.5 434L1123.6 422.8" stroke="#ffffff"/>
<path d="M1120 433L1112 434.7" stroke="#ffffff"/>
<path d="M1123.5 434L1115.5 435.7" stroke="#ffffff"/>
<path d="M1120 433L1128.8 444.8" stroke="#ffffff"/>
<path d="M1123.5 434L1132.3 445.8" stroke="#ffffff"/>
<ellipse cx="1232.3" cy="432" rx="4" ry="5" stroke="#ffffff" transform="rotate(20 1232.3 432)"/>
<ellipse cx="1233.6" cy="432.6" rx="4" ry="5" stroke="#ffffff" transform="rotate(20 1233.6 432.6)"/>
<ellipse cx="1232.3" cy="432" rx="2" ry="2.75" stroke="#ffffff" transform="rotate(20 1232.3 432)"/>
<ellipse cx="1232.3" cy="432" rx="0.75" ry="1" stroke="#ffffff" transform="rotate(20 1232.3 432)"/>
<ellipse cx="1238" cy="443.6" rx="3.6" ry="4.5" stroke="#ffffff" transform="rotate(20 1238 443.6)"/>
<ellipse cx="1239.3" cy="444.2" rx="3.6" ry="4.5" stroke="#ffffff" transform="rotate(20 1239.3 444.2)"/>
<ellipse cx="1238" cy="443.6" rx="1.8" ry="2.48" stroke="#ffffff" transform="rotate(20 1238 443.6)"/>
<ellipse cx="1238" cy="443.6" rx="0.67" ry="0.9" stroke="#ffffff" transform="rotate(20 1238 443.6)"/>
<ellipse cx="1241.5" cy="455" rx="4.48" ry="5.6" stroke="#ffffff" transform="rotate(20 1241.5 455)"/>
<ellipse cx="1242.8" cy="455.6" rx="4.48" ry="5.6" stroke="#ffffff" transform="rotate(20 1242.8 455.6)"/>
<ellipse cx="1241.5" cy="455" rx="2.24" ry="3.08" stroke="#ffffff" transform="rotate(20 1241.5 455)"/>
<ellipse cx="1241.5" cy="455" rx="0.84" ry="1.12" stroke="#ffffff" transform="rotate(20 1241.5 455)"/>
<ellipse cx="1235" cy="443" rx="3" ry="4" stroke="#ffffff" transform="rotate(20 1235 443)"/>
<ellipse cx="1236.2" cy="443.6" rx="3" ry="4" stroke="#ffffff" transform="rotate(20 1236.2 443.6)"/>
<path d="M1233.5 443L1230.8 432" stroke="#ffffff"/>
<path d="M1237 444L1234.3 433" stroke="#ffffff"/>
<path d="M1233.5 443L1236.5 443.6" stroke="#ffffff"/>
<path d="M1237 444L1240 444.6" stroke="#ffffff"/>
<path d="M1233.5 443L1240 455" stroke="#ffffff"/>
<path d="M1237 444L1243.5 456" stroke="#ffffff"/>
<ellipse cx="1187.5" cy="458.8" rx="4" ry="5" stroke="#ffffff" transform="rotate(20 1187.5 458.8)"/>
<ellipse cx="1188.8" cy="459.4" rx="4" ry="5" stroke="#ffffff" transform="rotate(20 1188.8 459.4)"/>
<ellipse cx="1187.5" cy="458.8" rx="2" ry="2.75" stroke="#ffffff" transform="rotate(20 1187.5 458.8)"/>
<ellipse cx="1187.5" cy="458.8" rx="0.75" ry="1" stroke="#ffffff" transform="rotate(20 1187.5 458.8)"/>
<ellipse cx="1178.3" cy="472.5" rx="4.32" ry="5.4" stroke="#ffffff" transform="rotate(20 1178.3 472.5)"/>
<ellipse cx="1179.6" cy="473.1" rx="4.32" ry="5.4" stroke="#ffffff" transform="rotate(20 1179.6 473.1)"/>
<ellipse cx="1178.3" cy="472.5" rx="2.16" ry="2.97" stroke="#ffffff" transform="rotate(20 1178.3 472.5)"/>
<ellipse cx="1178.3" cy="472.5" rx="0.81" ry="1.08" stroke="#ffffff" transform="rotate(20 1178.3 472.5)"/>
<ellipse cx="1194.7" cy="481.2" rx="4.64" ry="5.8" stroke="#ffffff" transform="rotate(20 1194.7 481.2)"/>
<ellipse cx="1196" cy="481.8" rx="4.64" ry="5.8" stroke="#ffffff" transform="rotate(20 1196 481.8)"/>
<ellipse cx="1194.7" cy="481.2" rx="2.32" ry="3.19" stroke="#ffffff" transform="rotate(20 1194.7 481.2)"/>
<ellipse cx="1194.7" cy="481.2" rx="0.87" ry="1.16" stroke="#ffffff" transform="rotate(20 1194.7 481.2)"/>
<ellipse cx="1187" cy="470.5" rx="3" ry="4" stroke="#ffffff" transform="rotate(20 1187 470.5)"/>
<ellipse cx="1188.2" cy="471.1" rx="3" ry="4" stroke="#ffffff" transform="rotate(20 1188.2 471.1)"/>
<path d="M1185.5 470.5L1186 458.8" stroke="#ffffff"/>
<path d="M1189 471.5L1189.5 459.8" stroke="#ffffff"/>
<path d="M1185.5 470.5L1176.8 472.5" stroke="#ffffff"/>
<path d="M1189 471.5L1180.3 473.5" stroke="#ffffff"/>
<path d="M1185.5 470.5L1193.2 481.2" stroke="#ffffff"/>
<path d="M1189 471.5L1196.7 482.2" stroke="#ffffff"/>
<path d="M1173.8 406.7L1227.2 436.5" stroke="#ffffff"/>
<path d="M1174.8 406.2L1228 436" stroke="#ffffff"/>
<path d="M1157.1 406.7L1228.7 445.8" stroke="#ffffff"/>
<path d="M1158.6 409L1226.5 447.2" stroke="#ffffff"/>
<path d="M1128.2 422.6L1157.1 406.7" stroke="#ffffff"/>
<path d="M1128.2 423.4L1184.6 454.4" stroke="#ffffff"/>
<path d="M1131.1 427.7L1183.2 456.6" stroke="#ffffff"/>
<path d="M1132.6 430.6L1180.3 458.8" stroke="#ffffff"/>
<path d="M1136.9 437.8L1177.4 460.2" stroke="#ffffff"/>
<path d="M1194.7 466.7L1228.7 447.2" stroke="#ffffff"/>
<path d="M1195.2 467.6L1229.3 448.2" stroke="#ffffff"/>
<path d="M1196.2 468.4L1230.1 449.1" stroke="#ffffff"/>
<path d="M1077.5 493.5L1279.5 493.5" stroke="#00ffff"/>
<path d="M1077.5 502.5L1279.5 502.5" stroke="#00ffff"/>
<path d="M1077.5 512.5L1279.5 512.5" stroke="#00ffff"/>
<path d="M1077.5 521.5L1279.5 521.5" stroke="#00ffff"/>
<path d="M1077.5 530.5L1279.5 530.5" stroke="#00ffff"/>
<path d="M1077.5 539.5L1279.5 539.5" stroke="#00ffff"/>
<path d="M1077.5 548.5L1279.5 548.5" stroke="#00ffff"/>
<path d="M1077.5 557.5L1279.5 557.5" stroke="#00ffff"/>
<path d="M1077.5 566.5L1279.5 566.5" stroke="#00ffff"/>
<path d="M1088.5 493.5L1088.5 579.5" stroke="#00ffff"/>
<path d="M1130.5 493.5L1130.5 579.5" stroke="#00ffff"/>
<path d="M1168.5 493.5L1168.5 579.5" stroke="#00ffff"/>
<path d="M1180.5 493.5L1180.5 579.5" stroke="#00ffff"/>
<path d="M1220.5 493.5L1220.5 579.5" stroke="#00ffff"/>
<path d="M1246.5 493.5L1246.5 579.5" stroke="#00ffff"/>
<path d="M1232.5 493.5L1232.5 573.5" stroke="#00ffff"/>
<path d="M1220.5 573.5L1246.5 573.5" stroke="#00ffff"/>
<path d="M1076.5 493.5L1076.5 631.5" stroke="#ffffff"/>
<path d="M1076.5 580.5L1280.5 580.5" stroke="#ffffff"/>
<rect x="1082" y="496" width="2" height="6" fill="#00ff00"/>
<rect x="1132.5" y="496.5" width="15" height="5" stroke="#00ff00"/>
<rect x="1173.5" y="496.5" width="3" height="5" stroke="#00ff00"/>
<rect x="1195.5" y="496.5" width="11" height="5" stroke="#00ff00"/>
<rect x="1082" y="505" width="2" height="6" fill="#00ff00"/>
<rect x="1132.5" y="505.5" width="10" height="5" stroke="#00ff00"/>
<rect x="1173.5" y="505.5" width="3" height="5" stroke="#00ff00"/>
<rect x="1195.5" y="505.5" width="11" height="5" stroke="#00ff00"/>
<rect x="1082" y="515" width="2" height="6" fill="#00ff00"/>
<rect x="1132.5" y="515.5" width="9" height="5" stroke="#00ff00"/>
<rect x="1173.5" y="515.5" width="3" height="5" stroke="#00ff00"/>
<rect x="1195.5" y="515.5" width="11" height="5" stroke="#00ff00"/>
<rect x="1082" y="524" width="2" height="6" fill="#00ff00"/>
<rect x="1132.5" y="524.5" width="15" height="5" stroke="#00ff00"/>
<rect x="1172.5" y="524.5" width="5" height="5" stroke="#00ff00"/>
<rect x="1198.5" y="525.5" width="5" height="4" stroke="#00ff00"/>
<rect x="1082.5" y="533.5" width="2" height="5" stroke="#00ff00"/>
<rect x="1132.5" y="533.5" width="15" height="5" stroke="#00ff00"/>
<rect x="1173.5" y="533.5" width="3" height="5" stroke="#00ff00"/>
<rect x="1198.5" y="534.5" width="5" height="4" stroke="#00ff00"/>
<rect x="1082" y="542" width="2" height="6" fill="#00ff00"/>
<rect x="1132.5" y="542.5" width="7" height="5" stroke="#00ff00"/>
<rect x="1172.5" y="542.5" width="5" height="5" stroke="#00ff00"/>
<rect x="1198.5" y="543.5" width="5" height="4" stroke="#00ff00"/>
<rect x="1082" y="551" width="2" height="6" fill="#00ff00"/>
<rect x="1132.5" y="551.5" width="7" height="5" stroke="#00ff00"/>
<rect x="1173.5" y="551.5" width="3" height="5" stroke="#00ff00"/>
<rect x="1198.5" y="552.5" width="5" height="4" stroke="#00ff00"/>
<rect x="1082" y="560" width="2" height="6" fill="#00ff00"/>
<rect x="1132.5" y="560.5" width="7" height="5" stroke="#00ff00"/>
<rect x="1174" y="560" width="2" height="6" fill="#00ff00"/>
<rect x="1195.5" y="560.5" width="11" height="5" stroke="#00ff00"/>
<rect x="1078.5" y="570.5" width="7" height="6" stroke="#00ff00"/>
<rect x="1100.5" y="570.5" width="17" height="6" stroke="#00ff00"/>
<rect x="1140.5" y="570.5" width="17" height="6" stroke="#00ff00"/>
<rect x="1170.5" y="570.5" width="7" height="6" stroke="#00ff00"/>
<rect x="1189.5" y="570.5" width="19" height="6" stroke="#00ff00"/>
<rect x="1223.5" y="567.5" width="7" height="5" stroke="#00ff00"/>
<rect x="1236.5" y="567.5" width="7" height="5" stroke="#00ff00"/>
<rect x="1227.5" y="574.5" width="11" height="4" stroke="#00ff00"/>
<rect x="1254.5" y="570.5" width="16" height="6" stroke="#00ff00"/>
<path d="M1085.5 580.5L1085.5 608.5" stroke="#ffffff"/>
<path d="M1093.5 580.5L1093.5 608.5" stroke="#ffffff"/>
<path d="M1115.5 580.5L1115.5 608.5" stroke="#ffffff"/>
<path d="M1132.5 580.5L1132.5 608.5" stroke="#ffffff"/>
<path d="M1144.5 580.5L1144.5 631.5" stroke="#ffffff"/>
<path d="M1212.5 580.5L1212.5 631.5" stroke="#ffffff"/>
<path d="M1076.5 602.5L1144.5 602.5" stroke="#ffffff"/>
<path d="M1076.5 608.5L1212.5 608.5" stroke="#ffffff"/>
<path d="M1093.5 608.5L1093.5 631.5" stroke="#ffffff"/>
<path d="M1110.5 608.5L1110.5 631.5" stroke="#ffffff"/>
<path d="M1127.5 608.5L1127.5 631.5" stroke="#ffffff"/>
<path d="M1212.5 597.5L1280.5 597.5" stroke="#ffffff"/>
<path d="M1212.5 614.5L1280.5 614.5" stroke="#ffffff"/>
<path d="M1077.5 585.5L1143.5 585.5" stroke="#00ffff"/>
<path d="M1077.5 591.5L1143.5 591.5" stroke="#00ffff"/>
<path d="M1077.5 597.5L1143.5 597.5" stroke="#00ffff"/>
<path d="M1077.5 614.5L1143.5 614.5" stroke="#00ffff"/>
<path d="M1077.5 619.5L1143.5 619.5" stroke="#00ffff"/>
<path d="M1077.5 625.5L1143.5 625.5" stroke="#00ffff"/>
<path d="M1145.5 615.5L1211.5 615.5" stroke="#00ffff"/>
<path d="M1145.5 624.5L1211.5 624.5" stroke="#00ffff"/>
<path d="M1152.5 615.5L1152.5 624.5" stroke="#00ffff"/>
<path d="M1161.5 615.5L1161.5 624.5" stroke="#00ffff"/>
<path d="M1169.5 615.5L1169.5 624.5" stroke="#00ffff"/>
<path d="M1178.5 609.5L1178.5 630.5" stroke="#00ffff"/>
<path d="M1195.5 608.5L1195.5 624.5" stroke="#00ffff"/>
<path d="M1085.5 580.5L1085.5 602.5" stroke="#ffffff"/>
<path d="M1093.5 580.5L1093.5 602.5" stroke="#ffffff"/>
<path d="M1115.5 580.5L1115.5 602.5" stroke="#ffffff"/>
<path d="M1132.5 580.5L1132.5 602.5" stroke="#ffffff"/>
<path d="M1093.5 608.5L1093.5 631.5" stroke="#ffffff"/>
<path d="M1110.5 608.5L1110.5 631.5" stroke="#ffffff"/>
<path d="M1127.5 608.5L1127.5 631.5" stroke="#ffffff"/>
<rect x="1078.5" y="603.5" width="5" height="4" stroke="#00ff00"/>
<rect x="1086.5" y="603.5" width="5" height="4" stroke="#00ff00"/>
<rect x="1096.5" y="603.5" width="15" height="4" stroke="#00ff00"/>
<rect x="1119.5" y="603.5" width="8" height="4" stroke="#00ff00"/>
<rect x="1134.5" y="603.5" width="7" height="4" stroke="#00ff00"/>
<rect x="1080.5" y="609.5" width="8" height="4" stroke="#00ff00"/>
<rect x="1080.5" y="620.5" width="8" height="4" stroke="#00ff00"/>
<rect x="1080.5" y="626.5" width="8" height="4" stroke="#00ff00"/>
<rect x="1113.5" y="609.5" width="9" height="4" stroke="#00ff00"/>
<rect x="1114.5" y="626.5" width="8" height="4" stroke="#00ff00"/>
<rect x="1152.5" y="609.5" width="16" height="4" stroke="#00ff00"/>
<rect x="1154.5" y="625.5" width="14" height="4" stroke="#00ff00"/>
<rect x="1182.5" y="609.5" width="8" height="4" stroke="#00ff00"/>
<rect x="1199.5" y="609.5" width="8" height="4" stroke="#00ff00"/>
<rect x="1202.5" y="618.5" width="3" height="4" stroke="#00ff00"/>
<rect x="1188.5" y="625.5" width="14" height="4" stroke="#00ff00"/>
<path d="M1190.5 488.5L1193.5 488.5" stroke="#ffffff"/>
<path d="M1191.5 489.5L1194.5 489.5" stroke="#8c8c8c"/>
<!--/CAD-->
</svg>
</div>
<div id="laybar">
<svg width="1320" height="18" viewBox="0 728 1320 18" fill="none">
<g fill="#7a7a7a"><rect x="20" y="734" width="1.3" height="7.4"/><path d="M26.3 734 V741.4 L22 737.7Z"/><path d="M41.4 734 V741.4 L37 737.7Z"/><path d="M54 734 V741.4 L58.3 737.7Z"/><path d="M68 734 V741.4 L72.3 737.7Z"/><rect x="74" y="734" width="1.3" height="7.4"/></g>
<path d="M244.5 728 L236.5 744.5 H188.5 L184 736" stroke="#9a9a9a"/>
<path d="M187.5 728 L179 744.5 H131.5 L127 736" stroke="#9a9a9a"/>
<path d="M81.5 728 L90 744.5 H122.5 L130.5 728 Z" fill="#fff" stroke="none"/>
<path d="M81.5 728 L90 744.5 H122.5 L130.5 728" stroke="#9a9a9a"/>
</svg>
<span class="t" style="left:75px;top:0px;font-size:14px;font-weight:bold;color:#333;transform:scaleX(1.05);transform-origin:0 0">模型</span>
<span class="t" style="left:116px;top:0px;font-size:12.5px;transform:scaleX(0.97);transform-origin:0 0">Layout1</span>
<span class="t" style="left:172px;top:0px;font-size:12.5px;transform:scaleX(0.99);transform-origin:0 0">Layout2</span>

</div>
<div id="band"></div>
<div id="cmd">命令行</div>
</body>
</html>
